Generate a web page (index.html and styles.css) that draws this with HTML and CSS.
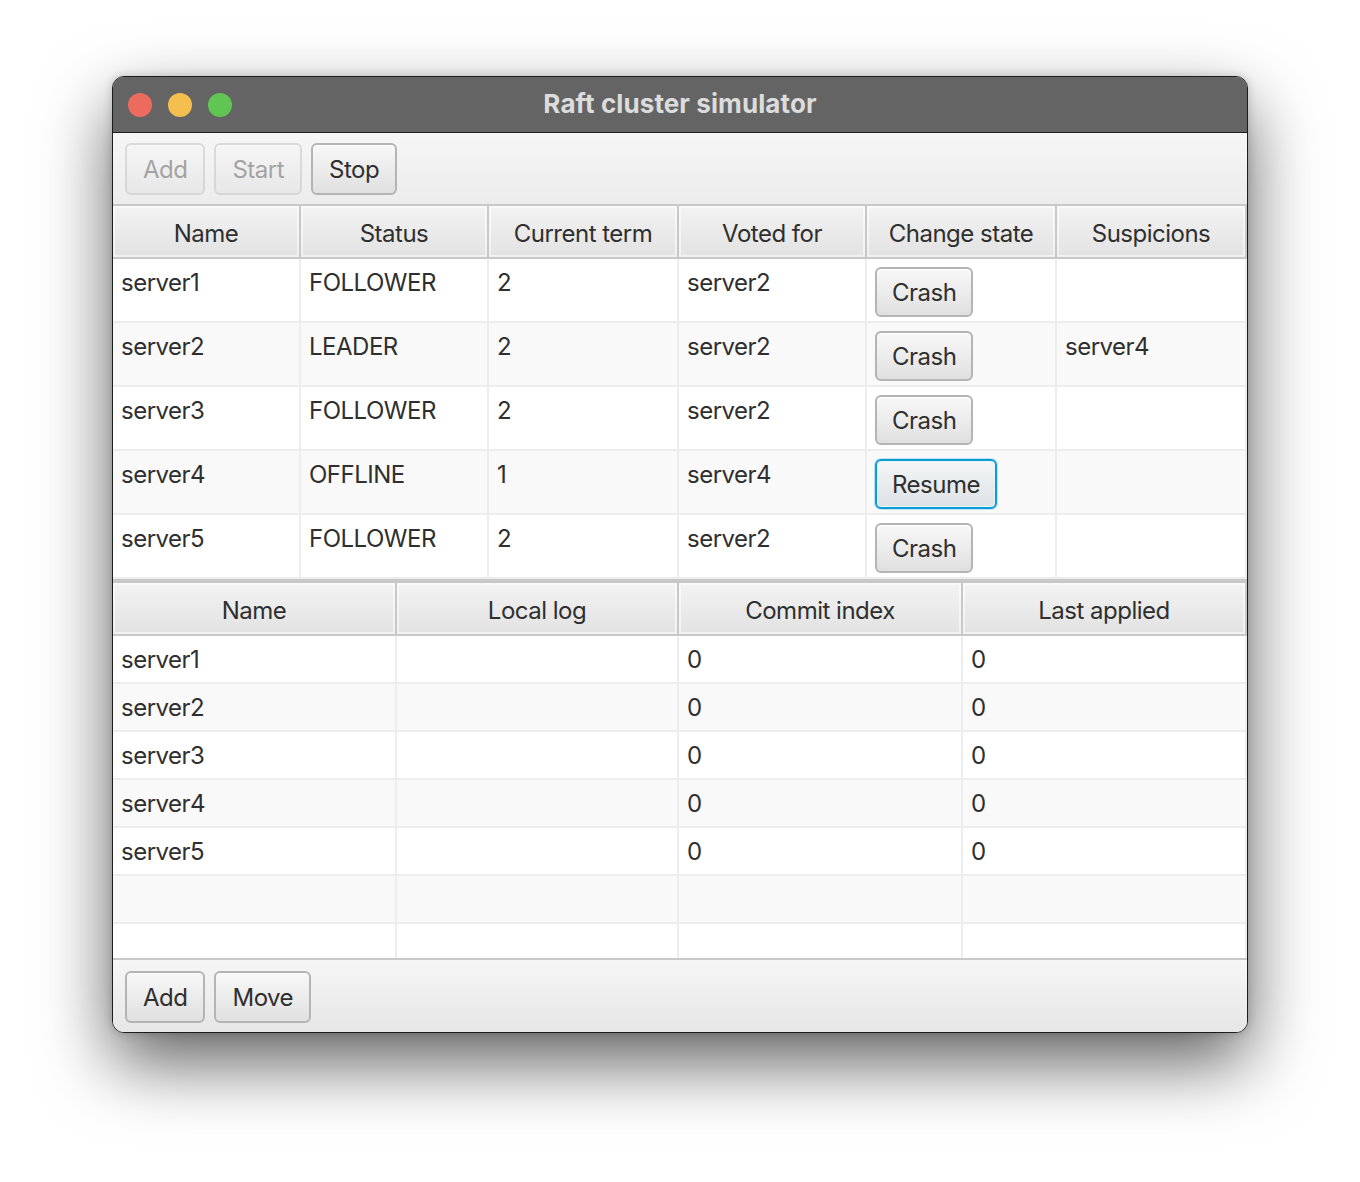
FILE: index.html
```html
<!DOCTYPE html>
<html lang="en">
<head>
<meta charset="utf-8">
<title>Raft cluster simulator</title>
<link rel="stylesheet" href="styles.css">
</head>
<body>
<div class="window">
  <div class="titlebar">
    <div class="lights">
      <span class="light red"></span>
      <span class="light yellow"></span>
      <span class="light green"></span>
    </div>
    <div class="title">Raft cluster simulator</div>
    <div></div>
  </div>
  <div class="toolbar">
    <button class="btn" disabled>Add</button>
    <button class="btn" disabled>Start</button>
    <button class="btn">Stop</button>
  </div>
  <div class="table t1">
    <div class="thead">
      <div class="th">Name</div>
      <div class="th">Status</div>
      <div class="th">Current term</div>
      <div class="th">Voted for</div>
      <div class="th">Change state</div>
      <div class="th">Suspicions</div>
    </div>
    <div class="tbody">
      <div class="row">
        <div class="td">server1</div><div class="td">FOLLOWER</div><div class="td">2</div><div class="td">server2</div>
        <div class="td act"><button class="btn cell">Crash</button></div><div class="td"></div>
      </div>
      <div class="row">
        <div class="td">server2</div><div class="td">LEADER</div><div class="td">2</div><div class="td">server2</div>
        <div class="td act"><button class="btn cell">Crash</button></div><div class="td">server4</div>
      </div>
      <div class="row">
        <div class="td">server3</div><div class="td">FOLLOWER</div><div class="td">2</div><div class="td">server2</div>
        <div class="td act"><button class="btn cell">Crash</button></div><div class="td"></div>
      </div>
      <div class="row">
        <div class="td">server4</div><div class="td">OFFLINE</div><div class="td">1</div><div class="td">server4</div>
        <div class="td act"><button class="btn cell focused">Resume</button></div><div class="td"></div>
      </div>
      <div class="row">
        <div class="td">server5</div><div class="td">FOLLOWER</div><div class="td">2</div><div class="td">server2</div>
        <div class="td act"><button class="btn cell">Crash</button></div><div class="td"></div>
      </div>
    </div>
  </div>
  <div class="table t2">
    <div class="thead">
      <div class="th">Name</div>
      <div class="th">Local log</div>
      <div class="th">Commit index</div>
      <div class="th">Last applied</div>
    </div>
    <div class="tbody">
      <div class="row"><div class="td">server1</div><div class="td"></div><div class="td">0</div><div class="td">0</div></div>
      <div class="row"><div class="td">server2</div><div class="td"></div><div class="td">0</div><div class="td">0</div></div>
      <div class="row"><div class="td">server3</div><div class="td"></div><div class="td">0</div><div class="td">0</div></div>
      <div class="row"><div class="td">server4</div><div class="td"></div><div class="td">0</div><div class="td">0</div></div>
      <div class="row"><div class="td">server5</div><div class="td"></div><div class="td">0</div><div class="td">0</div></div>
      <div class="row"><div class="td"></div><div class="td"></div><div class="td"></div><div class="td"></div></div>
      <div class="row"><div class="td"></div><div class="td"></div><div class="td"></div><div class="td"></div></div>
    </div>
  </div>
  <div class="bottombar">
    <button class="btn">Add</button>
    <button class="btn">Move</button>
  </div>
</div>
</body>
</html>
```

FILE: styles.css
```css
html, body {
  margin: 0;
  background: #ffffff;
}

body {
  font-family: Inter, "Noto Sans", sans-serif;
  padding-top: 76px;
  padding-left: 112px;
  height: 1182px;
  box-sizing: border-box;
  overflow: hidden;
}

.window {
  box-sizing: border-box;
  width: 1136px;
  height: 957px;
  border: 1px solid #1c1c1c;
  border-radius: 12px;
  overflow: hidden;
  display: flex;
  flex-direction: column;
  background: #f4f4f4;
  box-shadow: 0 30px 70px rgba(0, 0, 0, 0.62), 0 0 10px rgba(0, 0, 0, 0.18);
}

.titlebar {
  height: 56px;
  flex: none;
  box-sizing: border-box;
  border-bottom: 1px solid #1f1f1f;
  background: #646464;
  display: grid;
  grid-template-columns: 1fr auto 1fr;
  align-items: center;
  padding: 0 15px;
}

.lights {
  display: flex;
  gap: 16px;
}

.light {
  width: 24px;
  height: 24px;
  border-radius: 50%;
  display: block;
}

.red { background: #ed6a5e; }
.yellow { background: #f5bf4f; }
.green { background: #61c554; }

.title {
  font-weight: 700;
  font-size: 26px;
  color: #dcdcdc;
  letter-spacing: 0.1px;
  padding-bottom: 2px;
}

.toolbar {
  height: 71px;
  flex: none;
  box-sizing: border-box;
  padding: 10px 12px 0;
  display: flex;
  align-items: flex-start;
  gap: 9px;
  background: linear-gradient(#f6f6f6, #ececec);
}

.btn {
  height: 52px;
  box-sizing: border-box;
  padding: 1px 16px 0;
  font-family: Inter, "Noto Sans", sans-serif;
  font-size: 24px;
  letter-spacing: -0.5px;
  color: #2f2f2f;
  border: 2px solid #b4b4b4;
  border-radius: 6px;
  background: linear-gradient(#f8f8f8, #e0e0e0);
  box-shadow: inset 0 1px 0 #ffffff;
}

.btn:disabled {
  opacity: 0.4;
}

.btn.cell {
  height: 50px;
  padding: 1px 15px 0;
}

.btn.focused {
  border-color: #0a9dd6;
  box-shadow: 0 0 0 1px rgba(10, 157, 214, 0.25), inset 0 0 0 1px #e6f4fa;
  background: linear-gradient(#f4f6f7, #dde2e4);
}

.table {
  flex: none;
  background: #ffffff;
  border-top: 2px solid #c8c8c8;
}

.t2 {
  border-top-width: 4px;
}

.thead {
  display: grid;
  height: 53px;
  box-sizing: border-box;
  border-bottom: 2px solid #c8c8c8;
}

.t1 .thead, .t1 .row {
  grid-template-columns: 188px 188px 190px 188px 190px 1fr;
}

.t2 .thead, .t2 .row {
  grid-template-columns: 284px 282px 284px 1fr;
}

.th {
  display: flex;
  align-items: center;
  justify-content: center;
  padding-top: 4px;
  box-sizing: border-box;
  border-right: 2px solid #c8c8c8;
  background: linear-gradient(#f3f3f3, #e2e2e2);
  box-shadow: inset 0 0 0 2px rgba(255, 255, 255, 0.5);
  font-size: 24px;
  letter-spacing: -0.5px;
  color: #2f2f2f;
}

.row {
  display: grid;
  height: 64px;
  box-sizing: border-box;
  border-bottom: 2px solid #ededed;
  background: #ffffff;
}

.row:nth-child(even) {
  background: #f9f9f9;
}

.t2 .tbody {
  height: 322px;
  overflow: hidden;
}

.t2 .row {
  height: 48px;
}

.td {
  box-sizing: border-box;
  border-right: 2px solid #ededed;
  padding: 9px 8px 0;
  font-size: 24px;
  letter-spacing: -0.5px;
  line-height: 30px;
  color: #2f2f2f;
  white-space: nowrap;
}

.td.act {
  padding-top: 8px;
}

.bottombar {
  flex: 1;
  box-sizing: border-box;
  border-top: 2px solid #c8c8c8;
  padding: 11px 12px 0;
  display: flex;
  align-items: flex-start;
  gap: 9px;
  background: linear-gradient(#f6f6f6, #e6e6e6);
}
```
